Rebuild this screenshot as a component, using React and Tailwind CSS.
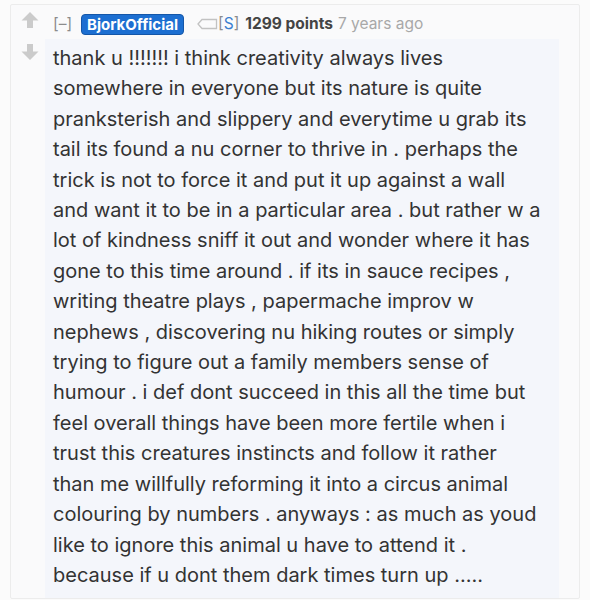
const lines = [
  'thank u !!!!!!! i think creativity always lives',
  'somewhere in everyone but its nature is quite',
  'pranksterish and slippery and everytime u grab its',
  'tail its found a nu corner to thrive in . perhaps the',
  'trick is not to force it and put it up against a wall',
  'and want it to be in a particular area . but rather w a',
  'lot of kindness sniff it out and wonder where it has',
  'gone to this time around . if its in sauce recipes ,',
  'writing theatre plays , papermache improv w',
  'nephews , discovering nu hiking routes or simply',
  'trying to figure out a family members sense of',
  'humour . i def dont succeed in this all the time but',
  'feel overall things have been more fertile when i',
  'trust this creatures instincts and follow it rather',
  'than me willfully reforming it into a circus animal',
  'colouring by numbers . anyways : as much as youd',
  'like to ignore this animal u have to attend it .',
  'because if u dont them dark times turn up .....',
]

function Arrow({ down }) {
  return (
    <svg width="18" height="18" viewBox="0 0 18 18" className={down ? 'rotate-180' : ''}>
      <path d="M9 1 L17.5 9.5 L12 9.5 L12 17 L6 17 L6 9.5 L0.5 9.5 Z" fill="#cbcbcb" />
    </svg>
  )
}

export default function App() {
  return (
    <div className="w-[590px] h-[600px] bg-[#fbfbfb] flex flex-col font-['Inter',sans-serif] overflow-hidden">
      <div className="h-[3px] bg-[#bdbdbd]" />
      <div className="flex-1 px-[10px] pt-[4px] pb-[2px]">
        <div className="h-full bg-[#fafafb] border border-[#ececec] rounded-[2px] flex">
          {/* votes */}
          <div className="w-[34px] flex flex-col items-center pt-[6px] gap-[14px] pl-[4px]">
            <Arrow />
            <Arrow down />
          </div>
          <div className="flex-1 pr-[20px]">
            {/* header */}
            <div className="flex items-center h-[34px] pt-[4px] pl-[8px] text-[15.5px] leading-none">
              <span className="text-[#8c8c8c] mr-[9px]">[–]</span>
              <span className="bg-[#1d6fd1] text-white font-bold text-[15px] rounded-[4px] px-[5px] py-[2px] border border-[#1557a8]">
                BjorkOfficial
              </span>
              <svg width="22" height="12" viewBox="0 0 22 12" className="ml-[12px]">
                <path d="M2 6 L6 1.5 H20.5 V10.5 H6 Z" fill="none" stroke="#c2c2c2" strokeWidth="1.3" />
              </svg>
              <span className="text-[#8c8c8c]">[<span className="text-[#3c7fd0]">S</span>]</span>
              <span className="font-bold text-[#444] ml-[6px]">1299 points</span>
              <span className="text-[#a8a8a8] ml-[5px]">7 years ago</span>
            </div>
            <div className="bg-[#f4f6fb] pl-[8px] pt-[4px] pb-[8px] text-[20px] leading-[30.4px] text-[#333]">
              {lines.map((l, i) => (
                <div key={i} className="whitespace-nowrap">{l}</div>
              ))}
            </div>
          </div>
        </div>
      </div>
      <div className="h-[3px] bg-[#8a8a8a]" />
    </div>
  )
}
